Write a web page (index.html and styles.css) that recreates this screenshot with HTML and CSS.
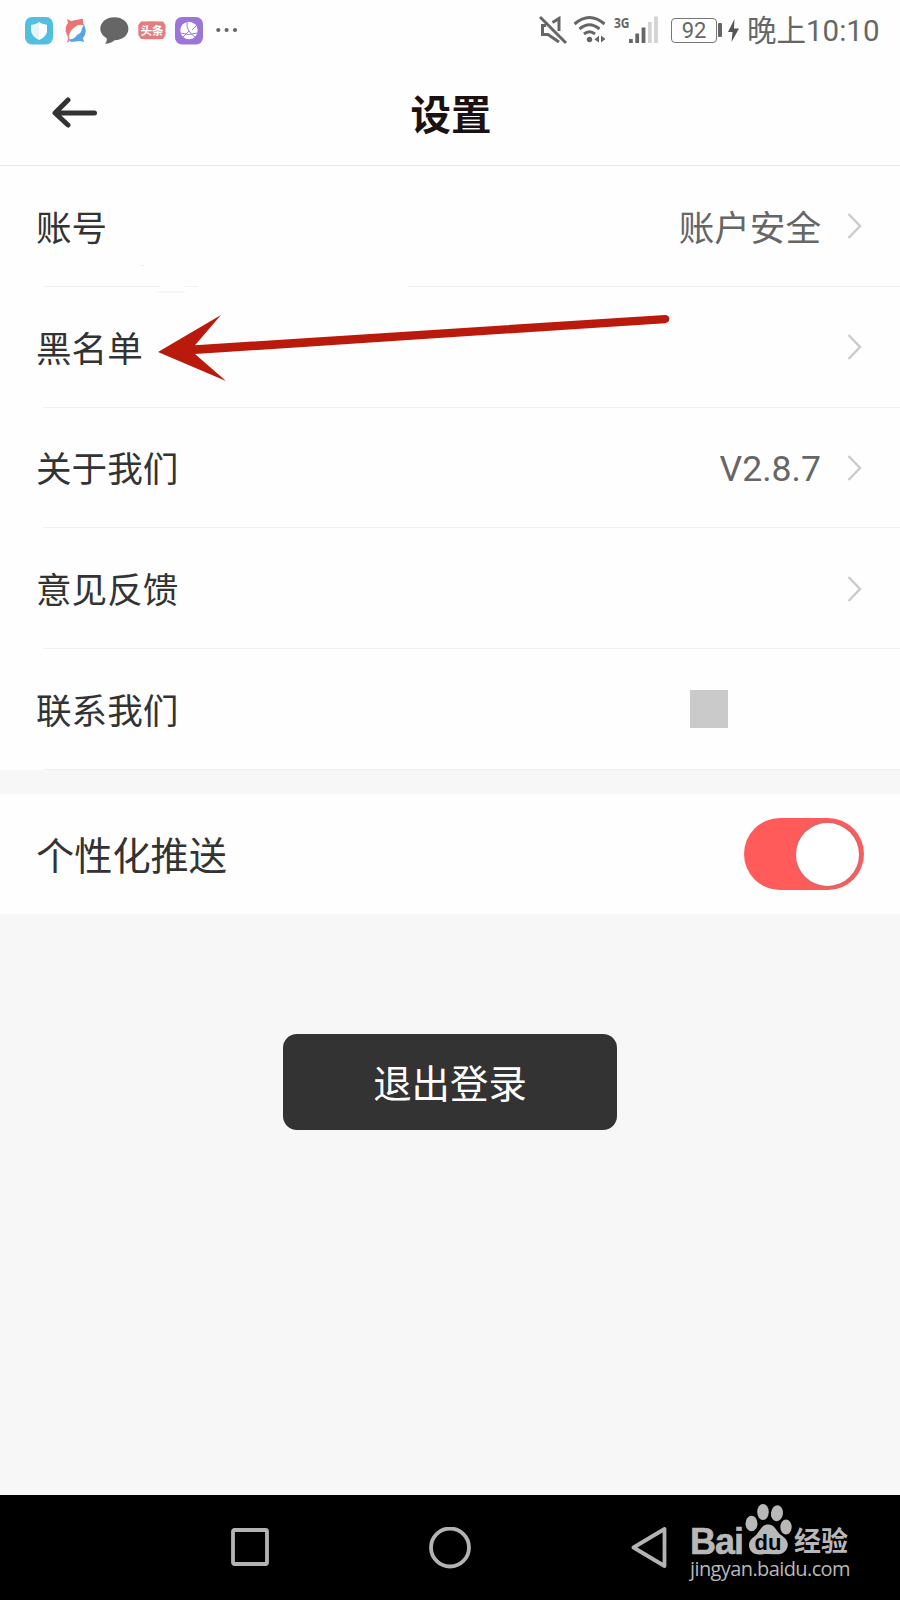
FILE: index.html
```html
<!DOCTYPE html>
<html lang="zh-CN">
<head>
    <meta charset="UTF-8">
    <meta name="viewport" content="width=device-width, initial-scale=1.0">
    <title>设置</title>
    <link rel="stylesheet" href="styles.css">
</head>
<body>
    <div class="status-bar">
        <div class="status-left">
            <svg width="28" height="28" viewBox="0 0 28 28">
                <rect width="28" height="27.5" rx="7" fill="#51bfdd"/>
                <path d="M14 5 Q18 8 22 8 V14 Q21 20 14 23 Q7 20 6 14 V8 Q10 8 14 5Z" fill="#e4f6fb"/>
                <path d="M14 5 Q18 8 22 8 V14 Q21 20 14 23Z" fill="#fff"/>
            </svg>
            <svg class="pinwheel" width="22" height="28" viewBox="0 0 22 28">
                <path d="M2 2 L6 4 L16 2 L18 2 L18 6 L20 9 Q14 6 10 10 Q5 13 4 19 L1 15 Q0 9 3 6Z" fill="#ea7472"/>
                <path d="M0 13 L4 18 L5 24 L2 26 L3 21Z" fill="#dd8e94"/>
                <path d="M19 8 Q23 15 18 21 L19 25 L15 24 L6 25 L4 22 Q9 23 12 18 Q17 16 17 11Z" fill="#58a5df"/>
            </svg>
            <svg class="bubble" width="29" height="28" viewBox="0 0 29 28">
                <path d="M14.5 0.3 C22.5 0.3 28.4 5.2 28.4 11.8 C28.4 18.5 22.5 23.2 14.5 23.3 C12 25.5 9.3 26.7 5 26.8 C6.6 25 6.9 23.5 6.7 21.2 C2.8 19 .3 15.7 .3 11.8 C.3 5.2 6.3 .3 14.5 .3Z" fill="#666"/>
            </svg>
            <svg class="news" width="28" height="28" viewBox="0 0 28 28">
                <path d="M3 4.5 Q14 4 25 4.5 L27.5 8 V18 L25 22 Q14 22.6 3 22 L.3 18 V8Z" fill="#e67c7d"/>
                <text x="14" y="17.8" text-anchor="middle">头条</text>
            </svg>
            <svg class="globe" width="28" height="28" viewBox="0 0 28 28">
                <rect width="28" height="27.5" rx="7" fill="#9d74d8"/>
                <circle cx="14" cy="13.5" r="8.7" fill="#fff"/>
                <path d="M12 5 Q11 14 20 20 M5.5 16 Q13 19 22.5 16 M14 14 Q11 17 8 20 M21 9 L17 13" fill="none" stroke="#a178d8" stroke-width="1"/>
            </svg>
            <svg class="more" width="22" height="28" viewBox="0 0 22 28">
                <g fill="#666"><circle cx="2.3" cy="13" r="2.1"/><circle cx="10.6" cy="13" r="2.1"/><circle cx="19" cy="13" r="2.1"/></g>
            </svg>
        </div>
        <div class="status-right">
            <svg width="29" height="30" viewBox="0 0 29 30">
                <path d="M1 2 L27 28" stroke="#666" stroke-width="3"/>
                <path d="M7 10.5 H3.5 V19.5 H9 L20 27 M13.5 7.5 L20 3.5 V16" fill="none" stroke="#666" stroke-width="3"/>
            </svg>
            <svg class="wifi" width="34" height="30" viewBox="0 0 34 30">
                <path d="M1.5 9 Q16.5 -4 31.5 9 M6.5 14 Q16.5 5.5 26.5 14 M11 19 Q16.5 14.5 22 19" fill="none" stroke="#666" stroke-width="3"/>
                <circle cx="16.5" cy="24.5" r="2.7" fill="#666"/>
                <path d="M26 20.5 V27.5 L21.5 24.5Z M28 20.5 L32.5 24 L28 27.5Z" fill="#666"/>
            </svg>
            <span class="network">3G</span>
            <svg class="signal" width="29" height="30" viewBox="0 0 29 30">
                <path d="M1.9 24 V28 M8.2 18.5 V28 M14.5 12.5 V28" stroke="#666" stroke-width="3.8"/>
                <path d="M20.8 7 V28 M27 1.5 V28" stroke="#d3d3d3" stroke-width="3.8"/>
            </svg>
            <span class="battery">92</span>
            <span class="battery-cap"></span>
            <svg class="bolt" width="11" height="24" viewBox="0 0 11 24">
                <path d="M6.5 0 L0 13 H4.5 L3.5 23 L11 9.5 H6Z" fill="#555"/>
            </svg>
            <span class="time">晚上10:10</span>
        </div>
    </div>

    <div class="header">
        <svg class="back" width="46" height="32" viewBox="0 0 46 32">
            <path d="M16 3 L3 16 L16 28 M4 16 H42.5" fill="none" stroke="#333" stroke-width="5" stroke-linecap="round" stroke-linejoin="round"/>
        </svg>
        <h1>设置</h1>
    </div>

    <div class="list">
        <div class="row first">
            <span class="label">账号</span>
            <span class="value label">账户安全</span>
            <svg class="chevron" width="15" height="26" viewBox="0 0 15 26"><path d="M1.5 1 L13 13 L1.5 25"/></svg>
            <svg class="divider" width="857" height="30" viewBox="0 0 857 30">
                <path d="M0 23.5 H117 M142 23.5 H155 M364 23.5 H857 M114 29 H142 M97 2.5 H101" stroke="#f1f1f1"/>
            </svg>
        </div>
        <div class="row">
            <span class="label">黑名单</span>
            <svg class="chevron" width="15" height="26" viewBox="0 0 15 26"><path d="M1.5 1 L13 13 L1.5 25"/></svg>
            <svg class="pointer" width="514" height="70" viewBox="0 0 514 70">
                <path d="M0 37 L63 0 L37 30.3 L507 0 Q511 0 511.3 3.5 Q511.5 7.5 507 8.2 L37 39 L68 66Z" fill="#b91a0b"/>
            </svg>
        </div>
        <div class="row">
            <span class="label">关于我们</span>
            <span class="value version">V2.8.7</span>
            <svg class="chevron" width="15" height="26" viewBox="0 0 15 26"><path d="M1.5 1 L13 13 L1.5 25"/></svg>
        </div>
        <div class="row">
            <span class="label">意见反馈</span>
            <svg class="chevron" width="15" height="26" viewBox="0 0 15 26"><path d="M1.5 1 L13 13 L1.5 25"/></svg>
        </div>
        <div class="row">
            <span class="label">联系我们</span>
            <span class="block"></span>
        </div>
    </div>

    <div class="push">
        <span class="label">个性化推送</span>
        <div class="toggle"><div class="knob"></div></div>
    </div>

    <button class="logout">退出登录</button>

    <div class="nav-bar">
        <svg class="recent" width="42" height="42" viewBox="0 0 42 42"><rect x="3" y="3" width="34" height="34" rx="1.5"/></svg>
        <svg class="home" width="42" height="42" viewBox="0 0 42 42"><circle cx="21" cy="20.5" r="19"/></svg>
        <svg class="return" width="37" height="42" viewBox="0 0 37 42"><path d="M2.5 20.5 L33.5 2 V39Z"/></svg>
        <div class="watermark">
            <div class="brand">
                <span class="bai">Bai</span>
                <svg width="48" height="52" viewBox="0 0 48 52">
                    <g fill="#b8b8b8">
                        <ellipse cx="6.5" cy="19.5" rx="6" ry="7.7"/>
                        <ellipse cx="18" cy="8" rx="5.8" ry="8"/>
                        <ellipse cx="32" cy="9.3" rx="6" ry="8" transform="rotate(8 32 9)"/>
                        <ellipse cx="41" cy="23" rx="5.7" ry="7.5"/>
                        <path d="M23 20.5 C30 20.5 31 27 36 31 C42 35 45 40 41 46 C37 52 30 50 23 50 C16 50 10 52 6 47 C2 41 4 36 10 32 C15 28 16 20.5 23 20.5Z"/>
                    </g>
                    <text x="23" y="45.5" text-anchor="middle">du</text>
                </svg>
                <span class="exp">经验</span>
            </div>
            <div class="site">jingyan.baidu.com</div>
        </div>
    </div>
</body>
</html>
```
FILE: styles.css
```css
* {
    box-sizing: border-box;
}
body {
    margin: 0;
    height: 1600px;
    display: flex;
    flex-direction: column;
    background-color: #f7f7f7;
    color: #333;
    font-family: Roboto, "Noto Sans CJK SC", sans-serif;
    overflow: hidden;
}
svg {
    display: block;
    flex: none;
}

/* status bar */
.status-bar {
    height: 60px;
    padding: 0 20px 0 25px;
    display: flex;
    justify-content: space-between;
    background: #fefefe;
    color: #666;
}
.status-left, .status-right {
    display: flex;
    align-items: flex-start;
}
.status-left {
    padding-top: 17px;
}
.status-right {
    padding-top: 15px;
}
.pinwheel {
    margin-left: 12px;
}
.bubble {
    margin-left: 13px;
}
.news {
    margin-left: 9px;
}
.news text {
    font: bold 11.5px "Noto Sans CJK SC", sans-serif;
    fill: #fff;
}
.globe {
    margin-left: 9px;
}
.more {
    margin-left: 13px;
}
.wifi {
    margin-left: 5px;
}
.network {
    width: 16px;
    margin: -1px 0 0 7px;
    font: bold 15px/16px "Open Sans", sans-serif;
    transform: scaleX(0.8);
    transform-origin: left;
}
.signal {
    margin: 0 0 0 -1px;
}
.battery {
    width: 46px;
    height: 25px;
    margin: 3px 0 0 13px;
    border: 1.5px solid #777;
    border-radius: 4px;
    text-align: center;
    font-size: 22px;
    line-height: 24px;
}
.battery-cap {
    width: 4px;
    height: 14px;
    margin: 8px 0 0 1px;
    border-radius: 1px;
    background: #666;
}
.bolt {
    margin: 4px 0 0 6px;
}
.time {
    width: 133px;
    margin: 0 0 0 8px;
    font-size: 29.5px;
    line-height: 32px;
    white-space: nowrap;
}

/* title */
.header {
    position: relative;
    height: 106px;
    border-bottom: 1px solid #e8e8e8;
    background: #fefefe;
    display: flex;
    align-items: center;
    justify-content: center;
}
.back {
    position: absolute;
    left: 52px;
    top: 37px;
}
h1 {
    margin: 0;
    color: #1b1110;
    font-size: 40.5px;
    line-height: 60px;
    padding: 6px 0 0 2px;
}

/* settings rows */
.list {
    height: 604px;
    background: #fefefe;
    font-size: 35.6px;
}
.row {
    position: relative;
    height: 120.8px;
    padding: 0 37px 0 36px;
    display: flex;
    align-items: center;
}
.row::after {
    content: "";
    position: absolute;
    left: 43px;
    right: 0;
    bottom: 0;
    height: 1px;
    background: #f1f1f1;
}
.row.first::after {
    display: none;
}
.divider {
    position: absolute;
    left: 43px;
    top: 97px;
}
.label {
    padding-bottom: 2px;
}
.value {
    margin-left: auto;
    color: #666;
}
.version {
    padding-top: 3px;
}
.chevron {
    margin-left: auto;
    margin-right: 1px;
    fill: none;
    stroke: #ccc;
    stroke-width: 2.5;
}
.value + .chevron {
    margin-left: 26px;
}
.pointer {
    position: absolute;
    left: 158px;
    top: 28px;
    z-index: 1;
}
.block {
    width: 38px;
    height: 38px;
    margin-left: auto;
    margin-right: 135px;
    margin-bottom: 1px;
    background: #cacaca;
}

.push {
    height: 120px;
    margin-top: 24px;
    padding: 0 36px;
    display: flex;
    align-items: center;
    justify-content: space-between;
    background: #fefefe;
    font-size: 38.2px;
}
.toggle {
    width: 120px;
    height: 72px;
    padding: 5px;
    border-radius: 36px;
    background: #ff5b5b;
    display: flex;
    justify-content: flex-end;
}
.knob {
    width: 63px;
    height: 63px;
    border-radius: 50%;
    background: #fff;
    box-shadow: 0 0 3px 2px #dc6768;
    clip-path: inset(-5px -5px -5px 0);
}
.logout {
    width: 334px;
    height: 96px;
    margin: 120px auto 0;
    padding: 0 0 3px;
    border: none;
    border-radius: 14px;
    background: #333;
    color: #fff;
    font-family: inherit;
    font-size: 38.4px;
}

/* navigation */
.nav-bar {
    height: 105px;
    margin-top: auto;
    padding-top: 32px;
    display: flex;
    background: #000;
    fill: none;
    stroke: #b3b3b3;
    stroke-width: 3.8;
    stroke-linejoin: round;
}
.recent {
    margin-left: 230px;
}
.home {
    margin-left: 157px;
}
.return {
    margin-left: 160px;
}
.watermark {
    width: 180px;
    margin: -23px 0 0 22px;
    color: #b8b8b8;
    stroke: none;
}
.brand {
    height: 52px;
    display: flex;
    align-items: flex-end;
}
.bai {
    width: 55px;
    font: bold 36px/28px "Liberation Sans", sans-serif;
    letter-spacing: -1px;
    -webkit-text-stroke: 0.6px #b8b8b8;
}
.brand text {
    font: bold 22px "Liberation Sans", sans-serif;
    fill: #000;
}
.exp {
    margin-left: 1px;
    font: bold 27px/32px "Noto Sans CJK SC", sans-serif;
}
.site {
    font: 20px/26px "Open Sans", sans-serif;
    letter-spacing: -0.6px;
}
```
